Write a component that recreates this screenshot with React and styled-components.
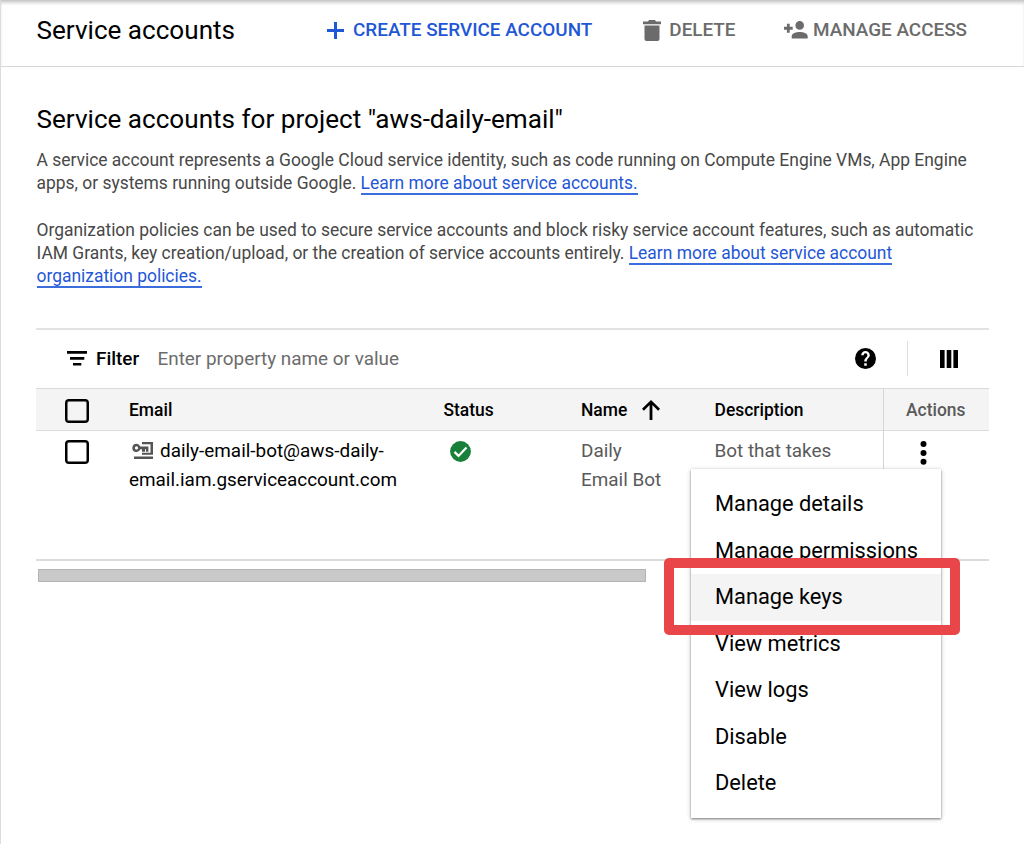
import React from "react";
import styled, { createGlobalStyle } from "styled-components";

const Global = createGlobalStyle`
  *, *::before, *::after { box-sizing: border-box; }
  body { margin: 0; background: #fff; color: #000; font-family: Roboto, "Liberation Sans", sans-serif; }
  h1, h2, p, ul { margin: 0; padding: 0; font-weight: 400; }
`;

const Page = styled.div`
  position: relative;
  width: 1024px;
  height: 844px;
  overflow: hidden;
  border-left: 1px solid #dcdcdc;
`;

const TopBar = styled.header`
  display: flex;
  align-items: center;
  height: 67px;
  padding: 0 0 6px 35.5px;
  border-bottom: 1px solid #d6d6d6;
  box-shadow: inset 0 4px 4px -2px rgba(0, 0, 0, 0.28);
`;

const PageTitle = styled.h1`
  width: 290px;
  font-size: 26.1px;
  line-height: 32px;
`;

const TopAction = styled.button`
  display: flex;
  align-items: center;
  gap: ${(p) => p.$gap}px;
  margin-right: ${(p) => p.$after}px;
  padding: 0;
  border: 0;
  background: none;
  font: 500 18.9px/24px Roboto, "Liberation Sans", sans-serif;
  color: ${(p) => (p.$primary ? "#1f57d6" : "#6b6b6b")};
  white-space: nowrap;
`;

const Icon = styled.svg`
  display: block;
  flex: none;
  fill: currentColor;
`;

const Content = styled.main`
  padding: 36px 0 0 35px;
  width: 988px;
`;

const Heading = styled.h2`
  padding-left: 0.5px;
  font-size: 26.1px;
  line-height: 32px;
  white-space: nowrap;
`;

const Paragraph = styled.p`
  margin-top: ${(p) => p.$top}px;
  padding-left: 0.5px;
  font-size: 17.44px;
  letter-spacing: -0.01px;
  line-height: 23.25px;
  color: #484848;
  white-space: nowrap;
`;

const Link = styled.a`
  color: #1f57d6;
  border-bottom: 2px solid #3b6ddd;
`;

const Table = styled.section`
  margin-top: 39px;
  width: 953px;
  border-top: 2px solid #e2e2e2;
`;

const FilterBar = styled.div`
  display: flex;
  align-items: center;
  height: 58px;
  padding: 0 31.5px 0 31px;
  font-size: 18.9px;
`;

const FilterLabel = styled.span`
  margin-left: 9px;
  width: 61.5px;
  font-weight: 500;
`;

const FilterHint = styled.span`
  flex: 1;
  color: #6c6c6c;
`;

const Divider = styled.span`
  width: 1px;
  height: 35px;
  margin: 0 32px 0 30.5px;
  background: #dedede;
`;

const Row = styled.div`
  display: grid;
  grid-template-columns: 93px 314.5px 137.5px 133.5px 168.5px 106px;
  height: ${(p) => p.$height}px;
  font-size: ${(p) => (p.$head ? 17.44 : 18.9)}px;
  line-height: ${(p) => (p.$head ? 42 : 29)}px;
  font-weight: ${(p) => (p.$head ? 500 : 400)};
  background: ${(p) => (p.$head ? "#f4f4f4" : "#fff")};
  border-top: ${(p) => (p.$head ? "1px solid #dadada" : "0")};
  border-bottom: ${(p) => (p.$head ? 1 : 2)}px solid #dcdcdc;
`;

const Cell = styled.div`
  padding-top: ${(p) => p.$top || 0}px;
  padding-left: ${(p) => p.$left || 0}px;
  color: ${(p) => (p.$muted ? "#5a5a5a" : "#000")};
`;

const HeadName = styled(Cell)`
  display: flex;
  align-items: center;
  gap: 15px;
`;

const ActionCell = styled(Cell)`
  border-left: 1px solid #d6d6d6;
`;

const Checkbox = styled.span`
  display: block;
  width: 24px;
  height: 24px;
  border: 2.5px solid #000;
  border-radius: 4px;
  box-shadow: inset 0 0 0 0.5px #000;
`;

const EmailLine = styled.div`
  display: flex;
  align-items: center;
  gap: 7px;
  padding-left: 3px;
`;

const ScrollThumb = styled.div`
  width: 608.5px;
  height: 13px;
  margin: 8.5px 0 0 1.5px;
  background: #c9c9c9;
  border: 1px solid #b4b4b4;
`;

const Menu = styled.ul`
  position: absolute;
  left: 690px;
  top: 469px;
  width: 250px;
  height: 349px;
  padding: 12px 0;
  list-style: none;
  background: #fff;
  box-shadow: 0 1px 2px rgba(0, 0, 0, 0.42), 0 1px 5px rgba(0, 0, 0, 0.2);
`;

const MenuItem = styled.li`
  height: 46.5px;
  padding-left: 24px;
  font-size: 21.8px;
  line-height: 46.5px;
  background: ${(p) => (p.$active ? "#f4f4f4" : "transparent")};
`;

const Highlight = styled.div`
  position: absolute;
  left: 663px;
  top: 558px;
  width: 296px;
  height: 77px;
  border: 10px solid #e94649;
  border-radius: 5px;
`;

const menuItems = ["Manage details", "Manage permissions", "Manage keys", "View metrics", "View logs", "Disable", "Delete"];

export default function App() {
  return (
    <Page>
      <Global />
      <TopBar>
        <PageTitle>Service accounts</PageTitle>
        <TopAction $primary $gap={9.5} $after={51}>
          <Icon width="17" height="17" viewBox="0 0 17 17"><path d="M7 0h3v7h7v3h-7v7H7v-7H0V7h7z" /></Icon>
          CREATE SERVICE ACCOUNT
        </TopAction>
        <TopAction $gap={8} $after={48.5}>
          <Icon width="18" height="21" viewBox="0 0 18 21"><path d="M6 0h6l1 1.500h5v2.700H0V1.500h5zM1.500 5.500h15V19a2 2 0 0 1-2 2h-11a2 2 0 0 1-2-2z" /></Icon>
          DELETE
        </TopAction>
        <TopAction $gap={5} $after={0}>
          <Icon width="24" height="18" viewBox="0 0 24 18"><path d="M15.700 8.700a4.300 4.300 0 1 0 0-8.600 4.300 4.300 0 0 0 0 8.600zM5.700 5.800V2.800H2.900v3H0v2.900h2.900v3h2.800v-3h3V5.800zM15.700 11c-3.200 0-8 1.200-8 4.300V17.500h16v-2.200c0-3.100-4.800-4.300-8-4.300z" /></Icon>
          MANAGE ACCESS
        </TopAction>
      </TopBar>
      <Content>
        <Heading>Service accounts for project "aws-daily-email"</Heading>
        <Paragraph $top={14}>
          A service account represents a Google Cloud service identity, such as code running on Compute Engine VMs, App Engine<br />
          apps, or systems running outside Google. <Link>Learn more about service accounts.</Link>
        </Paragraph>
        <Paragraph $top={23.25}>
          Organization policies can be used to secure service accounts and block risky service account features, such as automatic<br />
          IAM Grants, key creation/upload, or the creation of service accounts entirely. <Link>Learn more about service account</Link><br />
          <Link>organization policies.</Link>
        </Paragraph>
        <Table>
          <FilterBar>
            <Icon width="20" height="15" viewBox="0 0 20 15"><path d="M0 0h20v2.700H0zM3 6.100h14.300v2.700H3zM6 11.900h8.300v2.700H6z" /></Icon>
            <FilterLabel>Filter</FilterLabel>
            <FilterHint>Enter property name or value</FilterHint>
            <Icon width="21" height="21" viewBox="2 2 20 20"><path d="M12 2a10 10 0 1 0 0 20 10 10 0 0 0 0-20zm1.200 17h-2.400v-2.400h2.400zm2.200-8.200c-.9 1.300-2.200 1.500-2.200 4h-2.400c0-3.400 3-3.800 3-5.900a1.800 1.800 0 0 0-3.600 0H7.900a4.100 4.100 0 0 1 8.200 0c0 .7-.3 1.400-.7 1.900z" /></Icon>
            <Divider />
            <Icon width="18" height="18" viewBox="0 0 18 18"><path d="M0 0h4.600v18H0zM6.700 0h4.600v18H6.700zM13.400 0H18v18h-4.600z" /></Icon>
          </FilterBar>
          <Row $head $height={43}>
            <Cell $top={10} $left={29}><Checkbox /></Cell>
            <Cell>Email</Cell>
            <Cell>Status</Cell>
            <HeadName>
              Name
              <Icon width="18" height="20" viewBox="0 0 18 20"><path d="M9 0l9 8.800-1.900 1.900-5.700-5.600V20H7.600V5.100l-5.700 5.600L0 8.800z" /></Icon>
            </HeadName>
            <Cell>Description</Cell>
            <ActionCell $muted $left={22}>Actions</ActionCell>
          </Row>
          <Row $height={130}>
            <Cell $top={9} $left={29}><Checkbox /></Cell>
            <Cell $top={5.5}>
              <EmailLine>
                <Icon width="21" height="17" viewBox="0 0 21 17"><path fill="#555" fillRule="evenodd" d="M4.500 1.800a4.100 4.100 0 1 0 3.800 5.500H10v2.400h3V7.300h1v2.400h2.400V4.400H8.300A4.100 4.100 0 0 0 4.500 1.800zm0 2.500a1.600 1.600 0 1 1 0 3.200 1.600 1.600 0 0 1 0-3.200zM10 0h11v12.800H10V10.800h8.500V2.200H10zM2 14.500h19V17H2z" /></Icon>
                daily-email-bot@aws-daily-
              </EmailLine>
              email.iam.gserviceaccount.com
            </Cell>
            <Cell $top={10.5} $left={6}>
              <Icon width="21" height="21" viewBox="0 0 21 21"><circle cx="10.500" cy="10.500" r="10.400" fill="#188038" /><path d="M4.500 10.900l4 4 8-8.500" fill="none" stroke="#fff" strokeWidth="2.200" /></Icon>
            </Cell>
            <Cell $top={5.5} $muted>Daily<br />Email Bot</Cell>
            <Cell $top={5.5} $muted>Bot that takes</Cell>
            <ActionCell $top={10.5} $left={36}>
              <Icon width="7" height="24" viewBox="0 0 7 24"><circle cx="3.500" cy="3.100" r="3" /><circle cx="3.500" cy="11.900" r="3" /><circle cx="3.500" cy="20.700" r="3" /></Icon>
            </ActionCell>
          </Row>
        </Table>
        <ScrollThumb />
      </Content>
      <Menu>
        {menuItems.map((item) => (
          <MenuItem key={item} $active={item === "Manage keys"}>{item}</MenuItem>
        ))}
      </Menu>
      <Highlight />
    </Page>
  );
}
